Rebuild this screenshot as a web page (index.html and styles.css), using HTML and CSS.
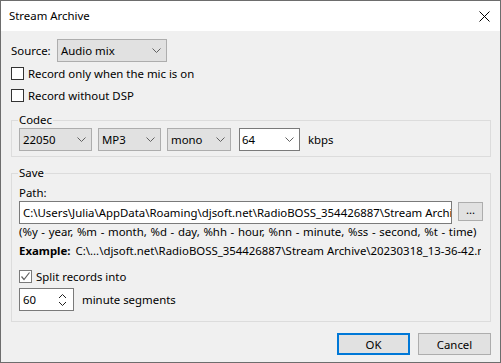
FILE: index.html
```html
<!DOCTYPE html>
<html lang="en">
<head>
    <meta charset="UTF-8">
    <meta name="viewport" content="width=device-width, initial-scale=1.0">
    <title>Stream Archive</title>
    <link rel="stylesheet" href="styles.css">
</head>
<body>
    <div class="window">
        <div class="titlebar">
            <span class="title">Stream Archive</span>
            <span class="close">
                <svg width="11" height="11" viewBox="0 0 11 11"><path d="M0.5 0.5L10.5 10.5M10.5 0.5L0.5 10.5" stroke="#000" stroke-width="1" fill="none"/></svg>
            </span>
        </div>
        <div class="content">
            <div class="row source-row">
                <span class="label">Source:</span>
                <div class="combo w-source">
                    <span class="value">Audio mix</span>
                    <svg class="chevron" width="9" height="5" viewBox="0 0 9 5"><polyline points="0.5,0.5 4.5,4.5 8.5,0.5" stroke="#606060" fill="none"/></svg>
                </div>
            </div>
            <div class="check"><span class="box"></span>Record only when the mic is on</div>
            <div class="check"><span class="box"></span>Record without DSP</div>

            <fieldset class="group codec">
                <legend>Codec</legend>
                <div class="row">
                    <div class="combo w-rate">
                        <span class="value">22050</span>
                        <svg class="chevron" width="9" height="5" viewBox="0 0 9 5"><polyline points="0.5,0.5 4.5,4.5 8.5,0.5" stroke="#606060" fill="none"/></svg>
                    </div>
                    <div class="combo w-format">
                        <span class="value">MP3</span>
                        <svg class="chevron" width="9" height="5" viewBox="0 0 9 5"><polyline points="0.5,0.5 4.5,4.5 8.5,0.5" stroke="#606060" fill="none"/></svg>
                    </div>
                    <div class="combo w-channels">
                        <span class="value">mono</span>
                        <svg class="chevron" width="9" height="5" viewBox="0 0 9 5"><polyline points="0.5,0.5 4.5,4.5 8.5,0.5" stroke="#606060" fill="none"/></svg>
                    </div>
                    <div class="combo edit w-bitrate">
                        <span class="value">64</span>
                        <svg class="chevron" width="9" height="5" viewBox="0 0 9 5"><polyline points="0.5,0.5 4.5,4.5 8.5,0.5" stroke="#606060" fill="none"/></svg>
                    </div>
                    <span class="unit">kbps</span>
                </div>
            </fieldset>

            <fieldset class="group save">
                <legend>Save</legend>
                <div class="field-label">Path:</div>
                <div class="row path-row">
                    <div class="textbox path">C:\Users\Julia\AppData\Roaming\djsoft.net\RadioBOSS_354426887\Stream Archive</div>
                    <div class="btn browse">...</div>
                </div>
                <div class="hint">(%y - year, %m - month, %d - day, %hh - hour, %nn - minute, %ss - second, %t - time)</div>
                <div class="example"><b>Example:</b><span class="example-value">C:\...\djsoft.net\RadioBOSS_354426887\Stream Archive\20230318_13-36-42.m</span></div>
                <div class="check split"><span class="box checked">
                    <svg width="11" height="11" viewBox="0 0 11 11"><polyline points="1.5,5.5 4,8.5 9.5,1.5" stroke="#606060" stroke-width="1.2" fill="none"/></svg>
                </span>Split records into</div>
                <div class="row segment-row">
                    <div class="textbox spin">
                        <span class="value">60</span>
                        <svg class="spin-arrows" width="9" height="14" viewBox="0 0 9 14"><polyline points="1,5 4.5,1.5 8,5" stroke="#202020" fill="none"/><polyline points="1,9 4.5,12.5 8,9" stroke="#202020" fill="none"/></svg>
                    </div>
                    <span class="unit">minute segments</span>
                </div>
            </fieldset>

            <div class="buttons">
                <div class="btn default">OK</div>
                <div class="btn">Cancel</div>
            </div>
        </div>
    </div>
</body>
</html>
```

FILE: styles.css
```css
body {
    margin: 0;
    font-family: "Noto Sans", "Open Sans", sans-serif;
    font-size: 11.4px;
    color: #000;
    background: #f0f0f0;
}
.window {
    width: 501px;
    height: 363px;
    box-sizing: border-box;
    border: 1px solid #6d6d6d;
    background: #f0f0f0;
    display: flex;
    flex-direction: column;
}
.titlebar {
    height: 30px;
    background: #fff;
    display: flex;
    align-items: center;
    justify-content: space-between;
    padding: 0 10px 0 8px;
}
.title {
    line-height: 16px;
}
.close {
    display: flex;
}
.content {
    padding: 8px 9px 0 10px;
}
.row {
    display: flex;
    align-items: center;
}
.source-row .label {
    width: 46px;
}
.combo {
    height: 23px;
    box-sizing: border-box;
    border: 1px solid #adadad;
    background: #e1e1e1;
    display: flex;
    align-items: center;
    justify-content: space-between;
    padding: 0 5px 0 3px;
}
.combo.edit {
    background: #fff;
    border-color: #7a7a7a;
    padding-left: 2px;
}
.w-source { width: 110px; }
.w-rate { width: 73px; margin-right: 6px; }
.w-format { width: 63px; margin-right: 6px; }
.w-channels { width: 64px; margin-right: 8px; }
.w-bitrate { width: 61px; margin-right: 8px; }
.check {
    height: 22px;
    display: flex;
    align-items: center;
}
.box {
    width: 13px;
    height: 13px;
    box-sizing: border-box;
    border: 1px solid #333;
    background: #fff;
    margin-right: 4px;
    display: flex;
    align-items: center;
    justify-content: center;
}
.box.checked {
    border-color: #7a7a7a;
}
.group {
    margin: 0;
    border: 1px solid #dcdcdc;
    padding: 0 7px;
    min-width: 0;
}
.group legend {
    padding: 0 1px;
    margin-left: -1px;
    line-height: 16px;
}
.codec {
    margin-top: 6px;
    padding-bottom: 5px;
}
.save {
    margin-top: 8px;
    padding-bottom: 10px;
}
.field-label {
    line-height: 16px;
    padding-top: 4px;
}
.textbox {
    height: 23px;
    box-sizing: border-box;
    border: 1px solid #7a7a7a;
    background: #fff;
    padding: 0 3px;
    display: flex;
    align-items: center;
    white-space: nowrap;
    overflow: hidden;
}
.path {
    width: 434px;
}
.path-row {
    align-items: flex-start;
}
.btn {
    box-sizing: border-box;
    border: 1px solid #adadad;
    background: #e1e1e1;
    display: flex;
    align-items: center;
    justify-content: center;
}
.browse {
    width: 25px;
    height: 19px;
    margin: 1px 0 0 6px;
    padding-bottom: 4px;
}
.hint {
    line-height: 16px;
    white-space: nowrap;
    word-spacing: 0.7px;
}
.example {
    line-height: 16px;
    margin-top: 3px;
    white-space: nowrap;
    overflow: hidden;
    margin-right: 2px;
}
.example b {
    margin-right: 5px;
}
.split {
    margin-top: 6px;
}
.segment-row {
    margin-top: 1px;
}
.spin {
    width: 55px;
    justify-content: space-between;
    padding-right: 6px;
}
.segment-row .unit {
    margin-left: 8px;
}
.buttons {
    display: flex;
    justify-content: flex-end;
    gap: 8px;
    margin-top: 11px;
}
.buttons .btn {
    width: 73px;
    height: 22px;
}
.buttons .default {
    border: 2px solid #0078d7;
}
```
